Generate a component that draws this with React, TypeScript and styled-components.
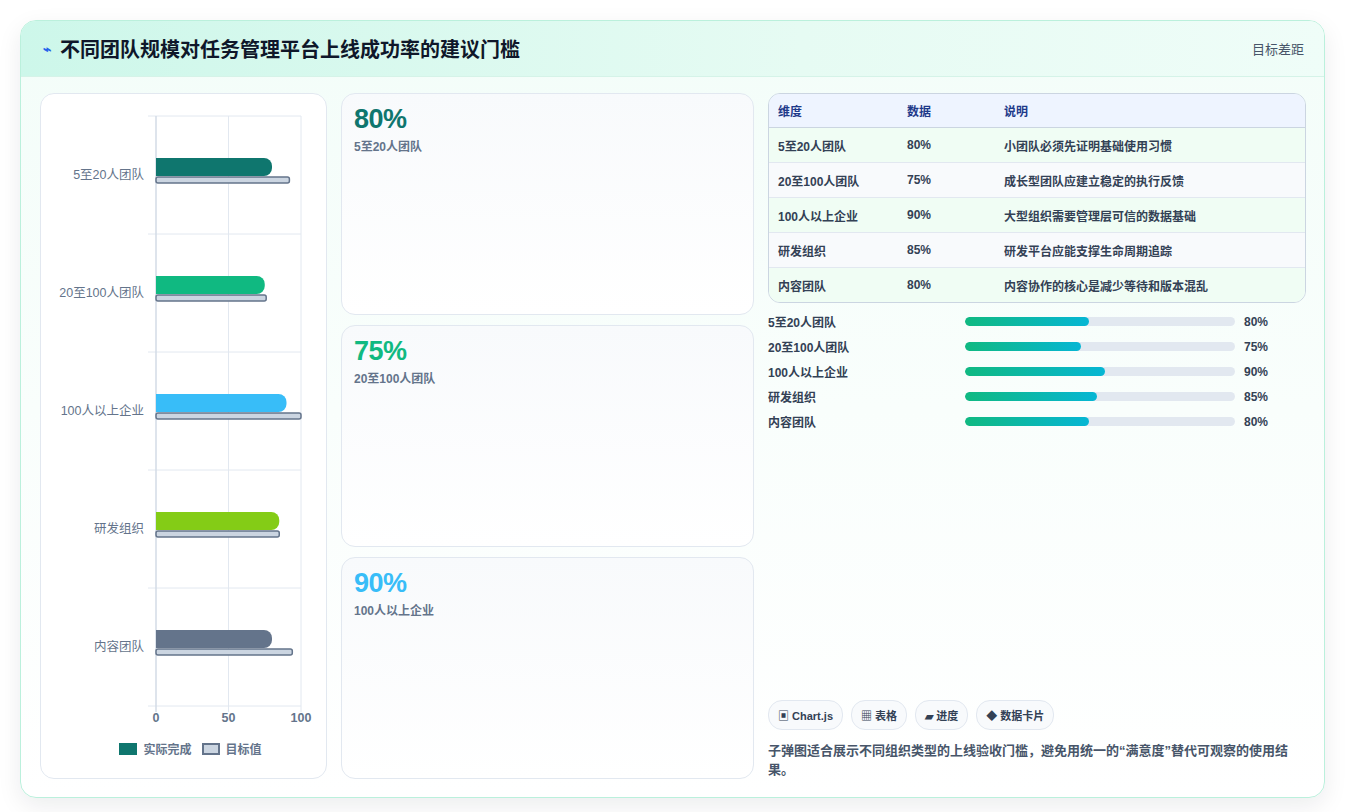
import styled, { createGlobalStyle } from 'styled-components';

const GlobalStyle = createGlobalStyle`
  html, body { margin: 0; padding: 0; background: #ffffff; }
  body { font-family: "Liberation Sans", "Noto Sans CJK SC", sans-serif; color: #1e293b; }
`;

const teams = [
  { name: '5至20人团队', value: 80, target: 92, color: '#0f766e', note: '小团队必须先证明基础使用习惯' },
  { name: '20至100人团队', value: 75, target: 76, color: '#10b981', note: '成长型团队应建立稳定的执行反馈' },
  { name: '100人以上企业', value: 90, target: 100, color: '#38bdf8', note: '大型组织需要管理层可信的数据基础' },
  { name: '研发组织', value: 85, target: 85, color: '#84cc16', note: '研发平台应能支撑生命周期追踪' },
  { name: '内容团队', value: 80, target: 94, color: '#64748b', note: '内容协作的核心是减少等待和版本混乱' },
];

const chips = ['▣ Chart.js', '▦ 表格', '▰ 进度', '◆ 数据卡片'];

// rounded only on the right end, like the chart library draws it
const barPath = (x: number, y: number, w: number, h: number, r: number) =>
  `M${x},${y} H${x + w - r} A${r},${r} 0 0 1 ${x + w},${y + r} V${y + h - r} A${r},${r} 0 0 1 ${x + w - r},${y + h} H${x} Z`;

const BulletChart = () => {
  const x0 = 115, w = 145, top = 22, band = 118;
  const sx = (v: number) => x0 + (v / 100) * w;
  return (
    <svg width="286" height="642" viewBox="0 0 286 642">
      {[0, 50, 100].map((t) => (
        <line key={t} x1={sx(t)} x2={sx(t)} y1={top} y2={top + band * 5 + 6} stroke="#e2e8f0" strokeWidth="1" />
      ))}
      <line x1={107} x2={sx(100)} y1={top} y2={top} stroke="#e2e8f0" />
      {teams.map((_, i) => (
        <line key={i} x1={107} x2={sx(100)} y1={top + band * (i + 1)} y2={top + band * (i + 1)} stroke="#e2e8f0" />
      ))}
      <line x1={sx(0)} x2={sx(0)} y1={top} y2={top + band * 5 + 6} stroke="#cbd5e1" />
      {teams.map((t, i) => {
        const cy = top + band * i + band / 2;
        return (
          <g key={t.name}>
            <text x={103} y={cy + 4} textAnchor="end" fontSize="12.5" fill="#64748b" fontFamily="Liberation Sans, Noto Sans CJK SC, sans-serif">{t.name}</text>
            <path d={barPath(sx(0), cy - 17, sx(t.value) - sx(0), 18, 8)} fill={t.color} />
            <rect x={sx(0)} y={cy + 2} width={sx(t.target) - sx(0)} height={6} rx={2} fill="#cbd5e1" stroke="#64748b" strokeWidth="1.5" />
          </g>
        );
      })}
      {[0, 50, 100].map((t) => (
        <text key={t} x={sx(t)} y={top + band * 5 + 16} textAnchor="middle" fontSize="12.5" fontWeight="bold" fill="#64748b" fontFamily="Liberation Sans, sans-serif">{t}</text>
      ))}
    </svg>
  );
};

export default function App() {
  return (
    <>
      <GlobalStyle />
      <Page>
        <Card>
          <Header>
            <Title><Bolt>⌁</Bolt>不同团队规模对任务管理平台上线成功率的建议门槛</Title>
            <HeaderNote>目标差距</HeaderNote>
          </Header>
          <Body>
            <ChartPanel>
              <BulletChart />
              <Legend>
                <Swatch $fill="#0f766e" />实际完成
                <Swatch $fill="#cbd5e1" $border="#64748b" />目标值
              </Legend>
            </ChartPanel>
            <Cards>
              {teams.slice(0, 3).map((t) => (
                <StatCard key={t.name}>
                  <Big $color={t.color}>{t.value}%</Big>
                  <StatLabel>{t.name}</StatLabel>
                </StatCard>
              ))}
            </Cards>
            <Side>
              <Table>
                <colgroup>
                  <col style={{ width: 129 }} />
                  <col style={{ width: 97 }} />
                  <col />
                </colgroup>
                <thead>
                  <tr><Th>维度</Th><Th>数据</Th><Th>说明</Th></tr>
                </thead>
                <tbody>
                  {teams.map((t, i) => (
                    <Tr key={t.name} $alt={i % 2 === 1}>
                      <Td>{t.name}</Td><Td>{t.value}%</Td><Td>{t.note}</Td>
                    </Tr>
                  ))}
                </tbody>
              </Table>
              <Progress>
                {teams.map((t) => (
                  <PRow key={t.name}>
                    <PLabel>{t.name}</PLabel>
                    <Track><Fill style={{ width: `${t.value * 0.58 - 0.4}%` }} /></Track>
                    <PValue>{t.value}%</PValue>
                  </PRow>
                ))}
              </Progress>
              <Spacer />
              <Chips>
                {chips.map((c) => <Chip key={c}>{c}</Chip>)}
              </Chips>
              <Summary>子弹图适合展示不同组织类型的上线验收门槛，避免用统一的“满意度”替代可观察的使用结果。</Summary>
            </Side>
          </Body>
        </Card>
      </Page>
    </>
  );
}

const Page = styled.div`
  padding: 20px 20px 14px 20px;
  width: 1345px;
  box-sizing: border-box;
`;

const Card = styled.div`
  width: 1305px;
  height: 778px;
  box-sizing: border-box;
  border: 1px solid #bbf0dc;
  border-radius: 16px;
  background: linear-gradient(180deg, #f3fdf9 0%, #ffffff 100%);
  box-shadow: 0 8px 24px rgba(15, 23, 42, 0.08);
  overflow: hidden;
  display: flex;
  flex-direction: column;
`;

const Header = styled.div`
  height: 55px;
  flex-shrink: 0;
  display: flex;
  align-items: center;
  justify-content: space-between;
  padding: 0 20px;
  background: linear-gradient(90deg, #cdf7ea 0%, #e6fbf3 60%, #effdf8 100%);
  border-bottom: 1px solid #d5f3e8;
`;

const Title = styled.h1`
  margin: 0;
  font-size: 20px;
  font-weight: bold;
  color: #0f172a;
  display: flex;
  align-items: center;
  gap: 9px;
  padding-left: 2px;
`;

const Bolt = styled.span`
  color: #2563eb;
  font-size: 14px;
`;

const HeaderNote = styled.span`
  font-size: 13px;
  color: #475569;
`;

const Body = styled.div`
  flex: 1;
  display: grid;
  grid-template-columns: 287px 413px 1fr;
  gap: 14px;
  padding: 16px 18px 18px 19px;
  min-height: 0;
`;

const ChartPanel = styled.div`
  background: #ffffff;
  border: 1px solid #e2e8f0;
  border-radius: 14px;
  display: flex;
  flex-direction: column;
  align-items: center;
`;

const Legend = styled.div`
  display: flex;
  align-items: center;
  gap: 6px;
  margin-top: 4px;
  margin-left: 10px;
  font-size: 12px;
  font-weight: bold;
  color: #64748b;
`;

const Swatch = styled.span<{ $fill: string; $border?: string }>`
  display: inline-block;
  width: 18px;
  height: 12px;
  box-sizing: border-box;
  background: ${(p) => p.$fill};
  border: ${(p) => (p.$border ? `2px solid ${p.$border}` : 'none')};
  margin-left: 4px;
`;

const Cards = styled.div`
  display: grid;
  grid-template-rows: repeat(3, 1fr);
  gap: 10px;
`;

const StatCard = styled.div`
  border: 1px solid #e2e8f0;
  border-radius: 14px;
  background: linear-gradient(180deg, #f8fafc 0%, #ffffff 100%);
  padding: 10px 12px;
`;

const Big = styled.div<{ $color: string }>`
  font-size: 27px;
  font-weight: bold;
  color: ${(p) => p.$color};
  letter-spacing: -0.5px;
`;

const StatLabel = styled.div`
  font-size: 12px;
  color: #64748b;
  font-weight: bold;
  margin-top: 2px;
`;

const Side = styled.div`
  display: flex;
  flex-direction: column;
  min-width: 0;
`;

const Table = styled.table`
  width: 100%;
  table-layout: fixed;
  border-collapse: separate;
  border-spacing: 0;
  border: 1px solid #cbd5e1;
  border-radius: 12px;
  overflow: hidden;
  font-size: 12px;
`;

const Th = styled.th`
  text-align: left;
  height: 33px;
  padding: 0 9px;
  background: #eef4ff;
  color: #1e3a8a;
  font-weight: bold;
  border-bottom: 1px solid #cbd5e1;
`;

const Tr = styled.tr<{ $alt: boolean }>`
  background: ${(p) => (p.$alt ? '#f8fafc' : '#f0fdf4')};
  &:not(:last-child) td { border-bottom: 1px solid #e2e8f0; }
`;

const Td = styled.td`
  height: 34px;
  padding: 0 9px;
  color: #334155;
  font-weight: bold;
`;

const Progress = styled.div`
  display: flex;
  flex-direction: column;
  gap: 9px;
  margin-top: 10px;
`;

const PRow = styled.div`
  display: grid;
  grid-template-columns: 197px 270px 1fr;
  align-items: center;
  gap: 0;
  height: 16px;
`;

const PLabel = styled.span`
  font-size: 12px;
  font-weight: bold;
  color: #334155;
`;

const Track = styled.div`
  height: 9px;
  border-radius: 5px;
  background: #e2e8f0;
  overflow: hidden;
`;

const Fill = styled.div`
  height: 100%;
  border-radius: 5px;
  background: linear-gradient(90deg, #10b981, #06b6d4);
`;

const PValue = styled.span`
  font-size: 12px;
  font-weight: bold;
  color: #334155;
  padding-left: 9px;
`;

const Spacer = styled.div`
  flex: 1;
`;

const Chips = styled.div`
  display: flex;
  gap: 8px;
`;

const Chip = styled.span`
  border: 1px solid #e2e8f0;
  border-radius: 14px;
  background: #f8fafc;
  padding: 6px 9px;
  font-size: 11px;
  font-weight: bold;
  color: #334155;
`;

const Summary = styled.p`
  margin: 11px 0 0;
  font-size: 13px;
  line-height: 19px;
  color: #475569;
  font-weight: bold;
`;
